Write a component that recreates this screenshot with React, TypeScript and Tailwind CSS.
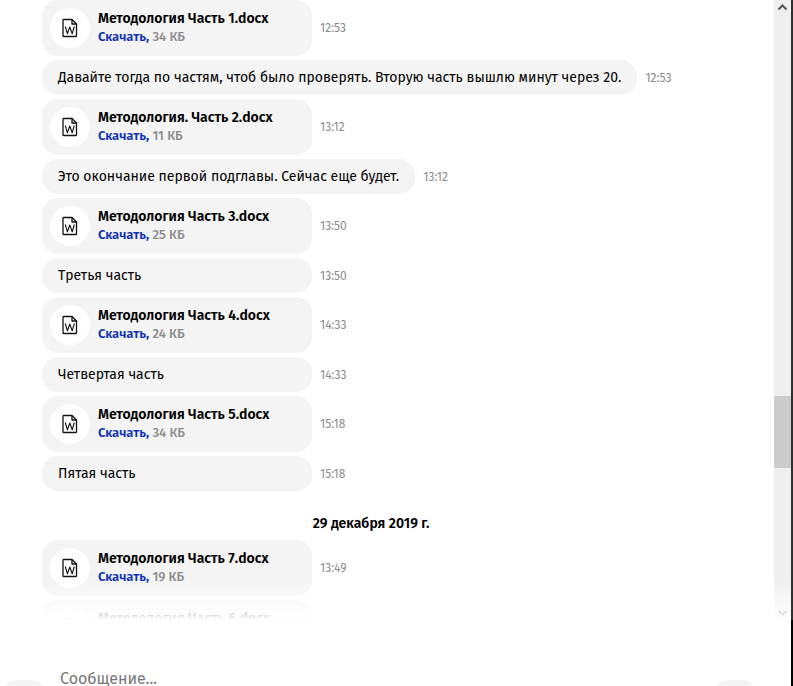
import { useState } from 'react'

interface ChatItem {
  id: number
  kind: 'file' | 'text' | 'date'
  text: string
  size?: string
  time?: string
}

const items: ChatItem[] = [
  { id: 1, kind: 'file', text: 'Методология Часть 1.docx', size: '34 КБ', time: '12:53' },
  { id: 2, kind: 'text', text: 'Давайте тогда по частям, чтоб было проверять. Вторую часть вышлю минут через 20.', time: '12:53' },
  { id: 3, kind: 'file', text: 'Методология. Часть 2.docx', size: '11 КБ', time: '13:12' },
  { id: 4, kind: 'text', text: 'Это окончание первой подглавы. Сейчас еще будет.', time: '13:12' },
  { id: 5, kind: 'file', text: 'Методология Часть 3.docx', size: '25 КБ', time: '13:50' },
  { id: 6, kind: 'text', text: 'Третья часть', time: '13:50' },
  { id: 7, kind: 'file', text: 'Методология Часть 4.docx', size: '24 КБ', time: '14:33' },
  { id: 8, kind: 'text', text: 'Четвертая часть', time: '14:33' },
  { id: 9, kind: 'file', text: 'Методология Часть 5.docx', size: '34 КБ', time: '15:18' },
  { id: 10, kind: 'text', text: 'Пятая часть', time: '15:18' },
  { id: 11, kind: 'date', text: '29 декабря 2019 г.' },
  { id: 12, kind: 'file', text: 'Методология Часть 7.docx', size: '19 КБ', time: '13:49' },
  { id: 13, kind: 'file', text: 'Методология Часть 6.docx' },
]

const WordIcon = () => (
  <svg width="16" height="20" viewBox="0 0 16 20" fill="none" stroke="#111" strokeWidth="1.3" strokeLinejoin="round" aria-hidden="true">
    <path d="M1.500 1.500h8.500l4.500 4.500v12a.5.5 0 0 1-.5.5H1.500a.5.5 0 0 1-.5-.5V2a.5.5 0 0 1 .5-.5z" />
    <path d="M10 1.500V6h4.500" />
    <path d="M3.300 8.500l2.100 7.300L7.800 9l2.400 6.800 2.100-7.300" strokeWidth="1.100" />
  </svg>
)

const FileBubble = ({ item }: { item: ChatItem }) => (
  <div className="flex h-14 min-w-[270px] items-center gap-2 rounded-2xl bg-[#f4f4f4] px-2">
    <div className="flex h-10 w-10 shrink-0 items-center justify-center rounded-full bg-white">
      <WordIcon />
    </div>
    <div className="h-9 whitespace-nowrap">
      <p className="text-[14px] leading-[18px] font-semibold text-black">{item.text}</p>
      {item.size && (
        <p className="text-[13px] leading-[18px] font-medium text-[#8c8c8c]">
          <a href="#download" className="font-semibold text-[#1033b4]">Скачать,</a> {item.size}
        </p>
      )}
    </div>
  </div>
)

const TextBubble = ({ item }: { item: ChatItem }) => (
  <div className="min-w-[270px] rounded-2xl bg-[#f4f4f4] px-4 py-2 text-[14px] leading-[19px] text-black">
    {item.text}
  </div>
)

const ScrollArrow = ({ d }: { d: string }) => (
  <svg width="17" height="17" viewBox="0 0 17 17" fill="none" stroke="#555" strokeWidth="2" aria-hidden="true">
    <path d={d} />
  </svg>
)

const App = () => {
  const [message, setMessage] = useState('')

  return (
    <div className="flex h-screen overflow-hidden bg-white font-['Fira_Sans','Noto_Sans',sans-serif]">
      <div className="flex min-w-0 flex-1 flex-col">
        <main className="relative flex min-h-0 flex-1 overflow-hidden">
          <div className="flex min-w-0 flex-1 flex-col gap-1 pl-[42px] pr-[74px]">
            {items.map((item) =>
              item.kind === 'date' ? (
                <h2 key={item.id} className="shrink-0 pt-[19px] pb-[3px] text-center text-[14px] leading-[19px] font-semibold text-black">
                  {item.text}
                </h2>
              ) : (
                <div key={item.id} className="flex shrink-0 items-center gap-2">
                  {item.kind === 'file' ? <FileBubble item={item} /> : <TextBubble item={item} />}
                  {item.time && <time className="text-[12px] leading-4 text-[#8c8c8c]">{item.time}</time>}
                </div>
              )
            )}
          </div>

          <div className="flex w-[17px] shrink-0 flex-col bg-[#efefef]">
            <ScrollArrow d="M4.500 9.500l4-4 4 4" />
            <div className="grow-[379]" />
            <div className="grow-[72] bg-[#cbcbcb]" />
            <div className="grow-[135]" />
            <ScrollArrow d="M4.500 8l4 4 4-4" />
          </div>

          <div className="pointer-events-none absolute inset-x-0 bottom-0 h-10 bg-linear-to-t from-white to-white/0" />
        </main>

        <form className="flex h-[66px] shrink-0 items-start gap-4 overflow-hidden pl-1 pr-9" onSubmit={(e) => e.preventDefault()}>
          <button type="button" aria-label="Прикрепить файл" className="mt-[60px] h-10 w-10 shrink-0 rounded-xl bg-[#f4f4f4]" />
          <input
            type="text"
            aria-label="Сообщение"
            placeholder="Сообщение..."
            value={message}
            onChange={(e) => setMessage(e.target.value)}
            className="mt-[47px] h-6 min-w-0 flex-1 text-[16px] leading-6 text-black outline-none placeholder:text-[#777]"
          />
          <button type="submit" aria-label="Отправить" className="mt-[60px] h-10 w-10 shrink-0 rounded-xl bg-[#f4f4f4]" />
        </form>
      </div>

      <div className="flex w-0.5 shrink-0 flex-col bg-[#303030]">
        <div className="flex-1" />
        <div className="h-[66px] bg-black" />
      </div>
    </div>
  )
}

export default App
